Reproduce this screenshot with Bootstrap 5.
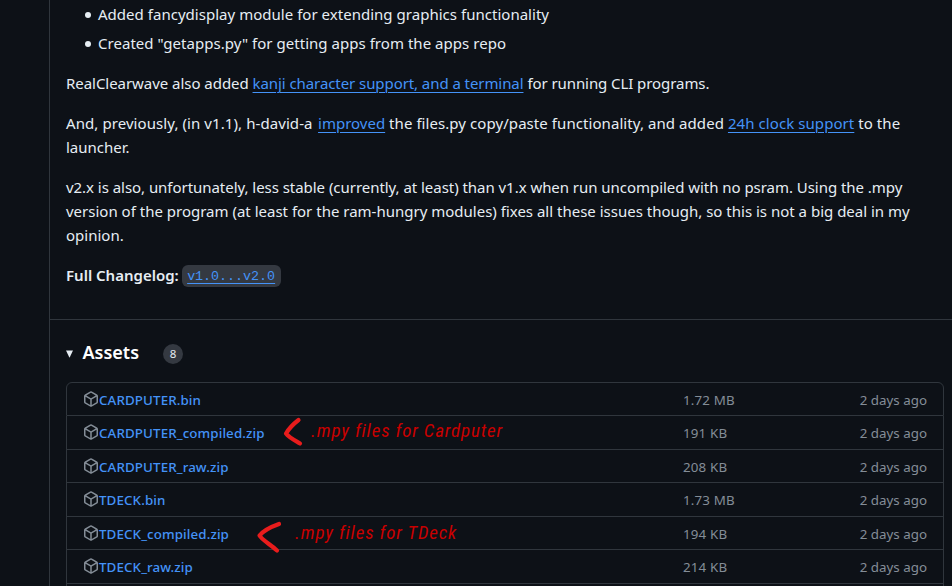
<!DOCTYPE html>
<html lang="en" data-bs-theme="dark">
<head>
<meta charset="utf-8">
<meta name="viewport" content="width=device-width, initial-scale=1">
<title>Release v2.0</title>
<link href="https://cdn.jsdelivr.net/npm/bootstrap@5.3.0/dist/css/bootstrap.min.css" rel="stylesheet">
<style>
  body { background: #0d1117; color: #e6edf3; font: 15px/24px "Noto Sans", "Open Sans", sans-serif; height: 586px; overflow: hidden; }
  .release { margin-left: 49px; border-left: 1px solid #30363d; height: 586px; overflow: hidden; }
  .notes { padding: 2px 16px 32px; height: 319px; white-space: nowrap; }
  .notes ul { padding-left: 19px; list-style: none; }
  .notes li { display: flex; align-items: center; }
  .notes li::before { content: ""; width: 6px; height: 6px; margin: 2px 7px 0 0; border-radius: 50%; background: currentColor; }
  .notes li + li { margin-top: 5px; }
  .notes a { color: #4493f8; text-decoration: underline; text-decoration-thickness: 1px; text-underline-offset: 3px; }
  .compare { display: inline-block; height: 22px; padding: 0 5.5px; margin: -1px 0 0 -1px; border-radius: 6px; background: #343941; color: inherit; font: 13.33px/23px "Liberation Mono", monospace; text-decoration: underline; text-underline-offset: 3px; position: relative; top: -1px; }
  .wide-a { letter-spacing: .025px; }
  .wide-b { letter-spacing: .035px; }
  .wide-c { letter-spacing: .08px; margin-right: 1.5px; }
  .wide-d { letter-spacing: .07px; }
  .tight-a { letter-spacing: -.075px; }
  .tight-b { letter-spacing: -.042px; }
  .assets { border-top: 1px solid #30363d; padding: 17px 8px 0 16px; }
  .assets-head { height: 45px; }
  .assets-title { font-size: 18px; font-weight: 600; line-height: 30px; margin-left: 8.500px; }
  .caret { width: 8px; height: 8px; }
  .counter { width: 20px; height: 20px; margin: 3px 0 0 24px; background: #343941; font-size: 11.5px; line-height: 20px; }
  .files { --bs-list-group-bg: transparent; --bs-list-group-border-color: #30363d; --bs-list-group-border-radius: 6px; font-size: 13.35px; line-height: 20px; }
  .files .list-group-item { height: 33.5px; padding: 0 16px; border-color: #30363d; color: #848d97; }
  .files .list-group-item:first-child { height: 34px; }
  .files a { color: #4493f8; font-weight: 500; letter-spacing: .11px; padding-top: 2px; }
  .cube { width: 16px; height: 16px; fill: #848d97; }
  .file-name { width: 600px; }
  .file-size { letter-spacing: .15px; padding-top: 2px; }
  .file-date { padding-top: 2px; }
  .hand-note { font: italic 19px/24px "Roboto Condensed", sans-serif; color: #c80000; letter-spacing: .83px; white-space: nowrap; }
  .hand-arrow { fill: none; stroke: #e81c1c; stroke-width: 4.2; stroke-linecap: round; stroke-linejoin: round; }
  .mark-one { left: 283px; top: 415px; }
  .mark-two { left: 255px; top: 518px; }
  .note-one { left: 311px; top: 419px; }
  .note-two { left: 295px; top: 521px; }
</style>
</head>
<body>
<svg class="d-none" aria-hidden="true">
  <symbol id="package" viewBox="0 0 16 16"><path d="m8.878.392 5.25 3.045c.54.314.872.89.872 1.514v6.098a1.75 1.75 0 0 1-.872 1.514l-5.25 3.045a1.75 1.75 0 0 1-1.756 0l-5.25-3.045A1.75 1.75 0 0 1 1 11.049V4.951c0-.624.332-1.201.872-1.514L7.122.392a1.75 1.75 0 0 1 1.756 0ZM7.875 1.69l-4.63 2.685L8 7.133l4.755-2.758-4.63-2.685a.248.248 0 0 0-.25 0ZM2.5 5.677v5.372c0 .09.047.171.125.216l4.625 2.683V8.432Zm6.25 8.271 4.625-2.683a.25.25 0 0 0 .125-.216V5.677L8.75 8.432Z"/></symbol>
</svg>
<main class="release">
  <section class="notes">
    <ul class="mb-3">
      <li class="wide-a">Added fancydisplay module for extending graphics functionality</li>
      <li class="wide-b">Created "getapps.py" for getting apps from the apps repo</li>
    </ul>
    <p class="mb-3"><span class="tight-b">RealClearwave also added </span><a class="tight-a" href="#">kanji character support, and a terminal</a> <span class="tight-a">for running CLI programs.</span></p>
    <p class="mb-3"><span class="wide-c">And, previously, (in v1.1), h-david-a </span><a href="#">improved</a> <span class="wide-d">the files.py copy/paste functionality, and added </span><a class="wide-d" href="#">24h clock support</a> <span class="wide-d">to the</span><br>launcher.</p>
    <p class="mb-3"><span class="tight-b">v2.x is also, unfortunately, less stable (currently, at least) than v1.x when run uncompiled with no psram. Using the .mpy</span><br><span>version of the program (at least for the ram-hungry modules) fixes all these issues though, so this is not a big deal in my</span><br>opinion.</p>
    <p class="mb-0"><span class="fw-semibold">Full Changelog:</span> <a href="#"><code class="compare">v1.0...v2.0</code></a></p>
  </section>
  <section class="assets">
    <div class="assets-head d-flex align-items-start">
      <div class="d-flex align-items-center">
        <svg class="caret mt-1" viewBox="0 0 8 8"><path d="M0 .5h7L3.5 7.8Z" fill="#e6edf3"/></svg>
        <h2 class="assets-title mb-0">Assets</h2>
        <span class="counter rounded-circle text-center">8</span>
      </div>
    </div>
    <ul class="list-group files">
      <li class="list-group-item d-flex align-items-center"><div class="file-name d-flex align-items-center"><svg class="cube"><use href="#package"/></svg><a class="text-decoration-none" href="#">CARDPUTER.bin</a></div><span class="file-size">1.72 MB</span><span class="ms-auto file-date">2 days ago</span></li>
      <li class="list-group-item d-flex align-items-center"><div class="file-name d-flex align-items-center"><svg class="cube"><use href="#package"/></svg><a class="text-decoration-none" href="#">CARDPUTER_compiled.zip</a></div><span class="file-size">191 KB</span><span class="ms-auto file-date">2 days ago</span></li>
      <li class="list-group-item d-flex align-items-center"><div class="file-name d-flex align-items-center"><svg class="cube"><use href="#package"/></svg><a class="text-decoration-none" href="#">CARDPUTER_raw.zip</a></div><span class="file-size">208 KB</span><span class="ms-auto file-date">2 days ago</span></li>
      <li class="list-group-item d-flex align-items-center"><div class="file-name d-flex align-items-center"><svg class="cube"><use href="#package"/></svg><a class="text-decoration-none" href="#">TDECK.bin</a></div><span class="file-size">1.73 MB</span><span class="ms-auto file-date">2 days ago</span></li>
      <li class="list-group-item d-flex align-items-center"><div class="file-name d-flex align-items-center"><svg class="cube"><use href="#package"/></svg><a class="text-decoration-none" href="#">TDECK_compiled.zip</a></div><span class="file-size">194 KB</span><span class="ms-auto file-date">2 days ago</span></li>
      <li class="list-group-item d-flex align-items-center"><div class="file-name d-flex align-items-center"><svg class="cube"><use href="#package"/></svg><a class="text-decoration-none" href="#">TDECK_raw.zip</a></div><span class="file-size">214 KB</span><span class="ms-auto file-date">2 days ago</span></li>
      <li class="list-group-item"></li>
    </ul>
  </section>
</main>
<!-- Hand-drawn annotations over the asset list -->
<svg class="hand-arrow position-absolute mark-one" width="22" height="34"><path d="M15.5 5C11 8.5 6 13.500 3 18.500C6 22.500 12 25.500 17 28.500"/></svg>
<span class="hand-note position-absolute note-one">.mpy files for Cardputer</span>
<svg class="hand-arrow position-absolute mark-two" width="28" height="36"><path d="M24 6C17 8.500 9 12 4.500 17.500C6 21 16 27 22 32.500"/></svg>
<span class="hand-note position-absolute note-two">.mpy files for TDeck</span>
<script src="https://cdn.jsdelivr.net/npm/bootstrap@5.3.0/dist/js/bootstrap.bundle.min.js"></script>
</body>
</html>
